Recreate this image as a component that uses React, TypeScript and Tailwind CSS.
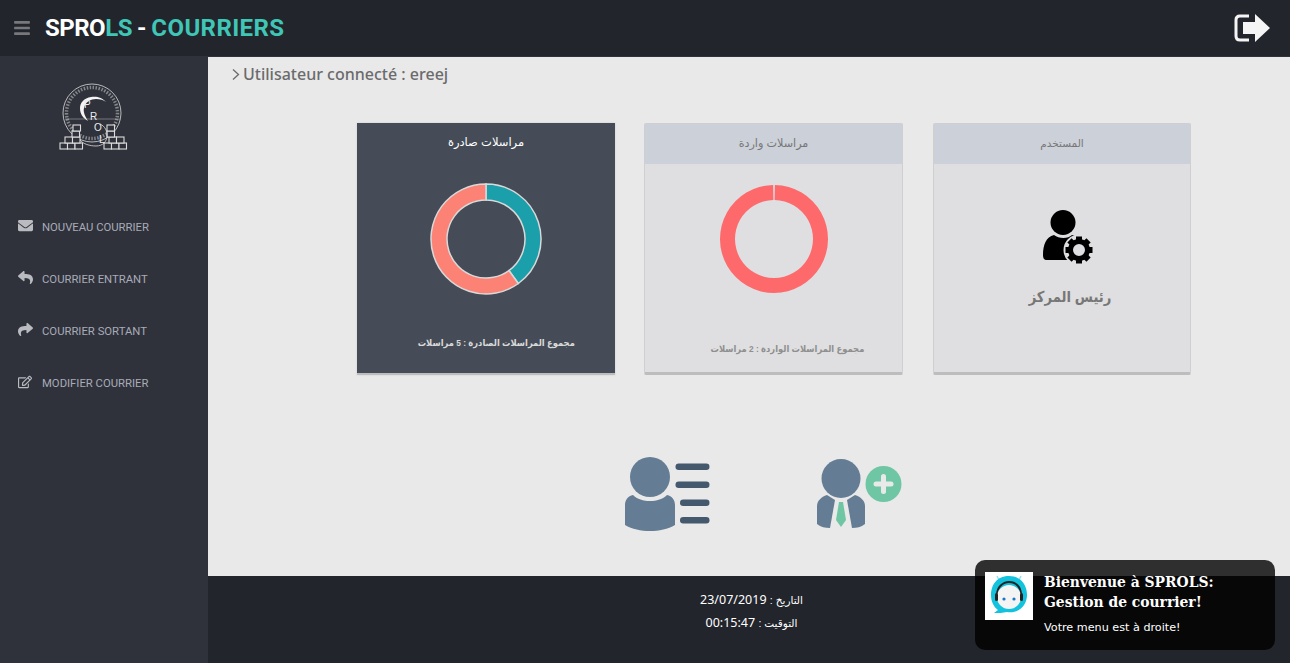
import React from "react";
import { FaBars, FaEnvelope, FaReply, FaShare, FaRegEdit } from "react-icons/fa";

const ar = { fontFamily: '"Liberation Sans", "DejaVu Sans", sans-serif' };

function polar(cx: number, cy: number, r: number, deg: number) {
  const a = ((deg - 90) * Math.PI) / 180;
  return [cx + r * Math.cos(a), cy + r * Math.sin(a)];
}
function seg(cx: number, cy: number, ro: number, ri: number, a: number, b: number) {
  const large = b - a > 180 ? 1 : 0;
  const [x1, y1] = polar(cx, cy, ro, a);
  const [x2, y2] = polar(cx, cy, ro, b);
  const [x3, y3] = polar(cx, cy, ri, b);
  const [x4, y4] = polar(cx, cy, ri, a);
  return `M${x1} ${y1}A${ro} ${ro} 0 ${large} 1 ${x2} ${y2}L${x3} ${y3}A${ri} ${ri} 0 ${large} 0 ${x4} ${y4}Z`;
}

function DonutOut() {
  return (
    <svg width="114" height="114" viewBox="0 0 114 114">
      <path d={seg(57, 57, 55, 39, 0, 144)} fill="#1b9faa" stroke="#d9d9d9" strokeWidth="1.500" />
      <path d={seg(57, 57, 55, 39, 144, 360)} fill="#fc8276" stroke="#d9d9d9" strokeWidth="1.500" />
    </svg>
  );
}
function DonutIn() {
  return (
    <svg width="114" height="114" viewBox="0 0 114 114">
      <path d={seg(57, 57, 54, 39, 0.9, 359.1)} fill="#fe6a6c" />
    </svg>
  );
}

function Logo() {
  const bricks: [number, number][] = [
    [2, 63], [9.5, 63], [17, 63], [7, 57], [14.5, 57], [14, 51], [15, 45],
    [46, 63], [53.5, 63], [61, 63], [51, 57], [58.5, 57], [49, 51], [49, 45],
  ];
  return (
    <svg width="70" height="72" viewBox="0 0 70 72" fill="none" stroke="#dcdcdc">
      <circle cx="34" cy="33" r="29" strokeWidth="0.8" />
      <circle cx="34" cy="33" r="25.500" strokeWidth="3.500" strokeDasharray="1.5 1.5" strokeOpacity="0.5" />
      <path d="M7 39H62" strokeWidth="0.6" strokeOpacity="0.7" />
      <path d="M48 22C44 17 38 16 33 17C26 18 22 23 22 28C22 34 25 38 30 41C27 36 25 32 26 28C27 22 33 19 38 19C42 19 46 20 48 22Z" fill="#f4f4f4" stroke="none" />
      {bricks.map(([x, y], i) => (
        <rect key={i} x={x} y={y} width="7.500" height="6" strokeWidth="1.100" fill="#2f323b" />
      ))}
      <path d="M42 44C52 48 52 66 38 66C32 66 25 64 22 60" strokeWidth="0.8" />
      <g fontFamily='"Liberation Sans", sans-serif' fontSize="10" fill="#ececec" stroke="none">
        <text x="26" y="28">P</text>
        <text x="32" y="39.500">R</text>
        <text x="36" y="51">O</text>
        <text x="41" y="62.500">L</text>
      </g>
    </svg>
  );
}

function Gear() {
  return (
    <g>
      <circle cx="36" cy="40" r="15.500" fill="#dfdfe1" />
      <circle cx="36" cy="40" r="8.500" fill="none" stroke="#000" strokeWidth="5" />
      {[0, 45, 90, 135, 180, 225, 270, 315].map((d) => (
        <rect key={d} x="33" y="26.500" width="6" height="5" fill="#000" transform={`rotate(${d} 36 40)`} />
      ))}
    </g>
  );
}
function UserGear() {
  return (
    <svg width="52" height="54" viewBox="0 0 52 54">
      <circle cx="20" cy="12.500" r="12.500" fill="#000" />
      <path d="M11 25C16 29 25 29 29 25C34 26 36 30 36 38V50H4C1 50 0 48 0 45C0 35 3 27 11 25Z" fill="#000" />
      <Gear />
    </svg>
  );
}

function ListUser() {
  return (
    <svg width="86" height="75" viewBox="0 0 86 75">
      <circle cx="25" cy="20" r="20" fill="#647d94" />
      <path d="M8 38C16 46 34 46 42 38C47 39 50 43 50 48V68C36 76 14 76 0 68V48C0 43 3 39 8 38Z" fill="#647d94" />
      <g fill="#44586e">
        <rect x="50.500" y="6.500" width="34" height="6.500" rx="3.200" />
        <rect x="50.500" y="24.500" width="34" height="6.500" rx="3.200" />
        <rect x="55" y="42.500" width="29.500" height="6.500" rx="3.200" />
        <rect x="55" y="60" width="29.500" height="6.500" rx="3.200" />
      </g>
    </svg>
  );
}
function AddUser() {
  return (
    <svg width="86" height="72" viewBox="0 0 86 72">
      <circle cx="24" cy="19.500" r="19.500" fill="#647d94" />
      <path d="M10 36L18 41L13 69C8 69 4 68 0 65V47C0 42 4 38 10 36Z" fill="#647d94" />
      <path d="M38 36L30 41L35 69C40 69 44 68 48 65V47C48 42 44 38 38 36Z" fill="#647d94" />
      <path d="M22 43H26L29 61L24 68L19 61Z" fill="#6fc6a5" />
      <circle cx="66.500" cy="25" r="18" fill="#6fc6a5" />
      <rect x="64" y="15" width="5" height="20" rx="2.500" fill="#e9e9e9" />
      <rect x="56.500" y="22.500" width="20" height="5" rx="2.500" fill="#e9e9e9" />
    </svg>
  );
}

function Bot() {
  return (
    <svg width="48" height="48" viewBox="0 0 48 48" className="bg-white shrink-0">
      <path d="M14 8L12 4M34 8L36 4" stroke="#9adfee" strokeWidth="1.500" />
      <path d="M24 4C11 4 6 14 6 23C6 30 9 35 13 38L9 41C13 41 18 41 22 40C34 42 42 33 42 23C42 13 36 4 24 4Z" fill="#13c2dd" />
      <path d="M12 23C12 15 18 10 24 10C31 10 36 15 36 23" fill="none" stroke="#222" strokeWidth="2" />
      <circle cx="24" cy="25" r="12" fill="#f4f4f4" />
      <circle cx="19" cy="27" r="1.600" fill="#1577c7" />
      <circle cx="29" cy="27" r="1.600" fill="#1577c7" />
      <rect x="10" y="21" width="3" height="8" rx="1.500" fill="#222" />
      <rect x="35" y="21" width="3" height="8" rx="1.500" fill="#222" />
    </svg>
  );
}

const menu = [
  { icon: <FaEnvelope size={15} />, label: "NOUVEAU COURRIER" },
  { icon: <FaReply size={15} />, label: "COURRIER ENTRANT" },
  { icon: <FaShare size={15} />, label: "COURRIER SORTANT" },
  { icon: <FaRegEdit size={14} />, label: "MODIFIER COURRIER" },
];

export default function App() {
  return (
    <div className="relative h-[663px] w-[1290px] overflow-hidden flex flex-col bg-[#e9e9e9]" style={{ fontFamily: '"Noto Sans", sans-serif' }}>
      <header className="h-[57px] shrink-0 bg-[#23252c] flex items-center border-b border-[#2f323b]">
        <FaBars size={18} className="ml-[13px] text-[#77787b]" />
        <div className="ml-[14px] text-[24px] font-bold leading-none text-[#3fc6b6] [word-spacing:-1px]" style={{ fontFamily: "Roboto, sans-serif" }}>
          <span className="tracking-[-0.5px]"><span className="text-white">SPRO</span>LS</span> <span className="text-white">-</span> <span className="tracking-[0.4px]">COURRIERS</span>
        </div>
        <svg className="ml-auto mr-[20px]" width="36" height="28" viewBox="0 0 36 28">
          <path d="M15 2H6C3.500 2 2 3.500 2 6V22C2 24.500 3.500 26 6 26H15" fill="none" stroke="#f5f5f5" strokeWidth="3" />
          <path d="M9 8H21V0L36 14L21 28V20H9Z" fill="#f5f5f5" />
        </svg>
      </header>
      <div className="flex flex-1 min-h-0">
        <aside className="w-[208px] shrink-0 bg-[#2f323b] flex flex-col">
          <div className="pt-[23px] pl-[58px] h-[144px]">
            <Logo />
          </div>
          <nav className="flex flex-col">
            {menu.map((m) => (
              <div key={m.label} className="h-[52px] flex items-center text-[#a9abb8]" style={{ fontFamily: "Roboto, sans-serif" }}>
                <span className="w-[24px] ml-[18px] -mt-[3px] text-[#b9bbc0]">{m.icon}</span>
                <span className="mt-[3px] text-[11.300px]">{m.label}</span>
              </div>
            ))}
          </nav>
        </aside>
        <main className="flex-1 flex flex-col min-w-0">
          <div className="flex-1 flex flex-col">
            <div className="h-[66px] pl-[24px] pt-[6px] flex items-start text-[#6b6b6d] text-[16px] font-medium leading-[22px]">
              <svg className="mt-[6px] mr-[3px]" width="8" height="11" viewBox="0 0 8 11" fill="none" stroke="#6b6b6d" strokeWidth="1.300"><path d="M1 0.500L6.500 5.500L1 10.500" /></svg>
              Utilisateur connecté : ereej
            </div>
            <div className="pl-[149px] flex">
              <section className="w-[258px] h-[252px] bg-[#454c57] border-b-[2px] border-[#bdbdbd] shadow-[0_0_2px_#ccc] flex flex-col items-center text-white" style={ar}>
                <div className="h-[41px] shrink-0 pt-[11px] text-[11.500px] leading-[16px]" dir="rtl">مراسلات صادرة</div>
                <div className="mt-[18px]"><DonutOut /></div>
                <div className="mt-[40px] ml-[20px] text-[9.500px] scale-x-[0.88] font-bold leading-[14px] text-[#d9d9d9]" dir="rtl">مجموع المراسلات الصادرة : 5 مراسلات</div>
              </section>
              <section className="ml-[29px] w-[259px] h-[252px] bg-[#dfdfe1] border border-b-[3px] border-[#cfcfd2] border-b-[#bdbdbd] rounded-[2px] flex flex-col items-center text-[#777]" style={ar}>
                <div className="w-full h-[40px] shrink-0 bg-[#cbd0d9] pt-[11px] text-center text-[11.200px] leading-[16px]" dir="rtl">مراسلات واردة</div>
                <div className="mt-[18px]"><DonutIn /></div>
                <div className="mt-[46px] ml-[27px] text-[9.500px] scale-x-[0.88] font-bold leading-[14px] text-[#8f8f8f]" dir="rtl">مجموع المراسلات الواردة : 2 مراسلات</div>
              </section>
              <section className="ml-[30px] w-[258px] h-[252px] bg-[#dfdfe1] border border-b-[3px] border-[#cfcfd2] border-b-[#bdbdbd] rounded-[2px] flex flex-col items-center text-[#777]" style={ar}>
                <div className="w-full h-[40px] shrink-0 bg-[#cbd0d9] pt-[11px] text-center text-[10.500px] leading-[16px]" dir="rtl">المستخدم</div>
                <div className="mt-[46px] ml-[14px]"><UserGear /></div>
                <div className="mt-[21px] ml-[16px] text-[15px] scale-x-[0.88] font-bold leading-[24px]" dir="rtl">رئيس المركز</div>
              </section>
            </div>
            <div className="pl-[417px] mt-[82px] flex gap-[106px] items-start">
              <ListUser />
              <div className="mt-[2px]"><AddUser /></div>
            </div>
          </div>
          <footer className="h-[87px] shrink-0 bg-[#23252c] flex flex-col items-center pt-[12px] pl-[5px] text-[12.500px] leading-[23px] text-white">
            <div dir="rtl"><span style={ar} className="text-[10.500px]">التاريخ :</span> <span>23/07/2019</span></div>
            <div dir="rtl" className="-mt-[1px]"><span style={ar} className="text-[10.500px]">التوقيت :</span> <span>00:15:47</span></div>
          </footer>
        </main>
      </div>
      <div className="absolute left-[975px] top-[560px] w-[300px] h-[90px] rounded-[10px] bg-black/80 flex items-start pl-[10px] pt-[12px] text-white" style={{ fontFamily: '"DejaVu Sans", sans-serif' }}>
        <Bot />
        <div className="ml-[11px]">
          <div className="text-[13.900px] font-bold leading-[20px]" style={{ fontFamily: '"DejaVu Serif", serif' }}>Bienvenue à SPROLS:<br />Gestion de courrier!</div>
          <div className="mt-[9px] text-[11.200px] leading-[14px]">Votre menu est à droite!</div>
        </div>
      </div>
    </div>
  );
}
